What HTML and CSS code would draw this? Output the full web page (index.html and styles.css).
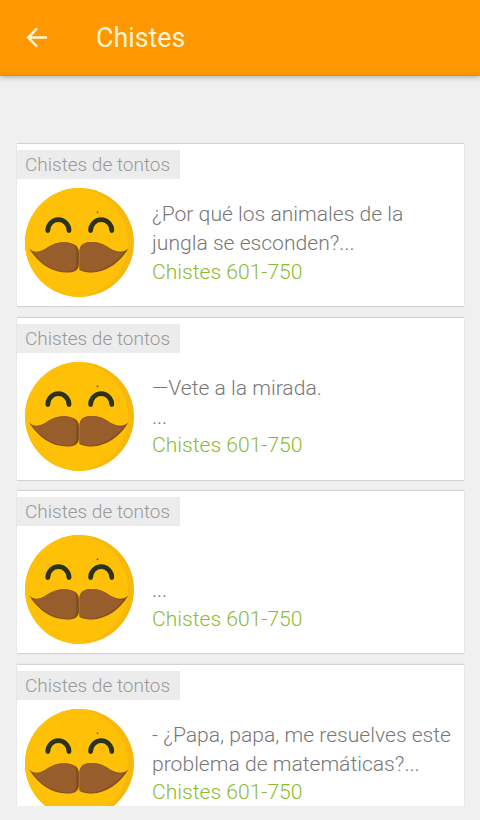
FILE: index.html
```html
<!DOCTYPE html>
<html lang="es">
<head>
<meta charset="utf-8">
<title>Chistes</title>
<link rel="stylesheet" href="styles.css">
</head>
<body>
<svg class="defs" width="0" height="0" aria-hidden="true">
  <symbol id="face" viewBox="0 0 110 110">
    <circle cx="54.500" cy="54.500" r="54.500" fill="#f6b80c"/>
    <path d="M54.500 0C84 4 103 28 103 54.500S84 105 54.500 109A54.500 54.500 0 0 1 54.500 0Z" fill="#ffc107"/>
    <path d="M22.800 42.500A10.600 10.800 0 0 1 44 42.500M65.600 42.500A10.600 10.800 0 0 1 86.800 42.500" fill="none" stroke="#2b331c" stroke-width="4.800" stroke-linecap="round"/>
    <circle cx="72.500" cy="24.300" r="1" fill="#9a6a10"/>
    <path d="M4 60.500C11 67 18 62.500 24 58.500C31 54 40 53 47 55.500C52 57 54 60 54 65V76C54 82 50 84.500 42 84.500C27 84.500 14 76 4 60.500Z" fill="#85501f"/>
    <path d="M6 62.500C12 66.500 18 62.500 24 58.500C31 54 40 53 46 55.500C50 57 51 60 51 65V76C51 81 48 83.500 41 83.500C28 83.500 16 75 6 62.500Z" fill="#975d2b"/>
    <path d="M103.300 60.500C96 67 88 62.500 82 58.500C75 54 66 53 60 55C56 56.500 54.500 60 54.500 64V82C58 84 63 84.500 67 84.500C81 84 95 75 103.300 60.500Z" fill="#85501f"/>
    <path d="M99 64.500C93 66.500 87 62 82 58.500C75 54 66 53 60 55C56 56.500 54.500 60 54.500 64V81C58 83 63 83.500 67 83.500C79 82.500 90 75 99 64.500Z" fill="#975d2b"/>
  </symbol>
</svg>
<header class="bar">
  <svg class="back" viewBox="0 0 24 24"><path d="M23 11.500H3M12 1.500L2.500 11.500L12 21.500"/></svg>
  <h1>Chistes</h1>
</header>
<main class="list">
  <article class="card">
    <span class="tag">Chistes de tontos</span>
    <div class="row">
      <svg class="face"><use href="#face"/></svg>
      <div class="text"><p>¿Por qué los animales de la<br>jungla se esconden?...</p><p class="range">Chistes 601-750</p></div>
    </div>
  </article>
  <article class="card">
    <span class="tag">Chistes de tontos</span>
    <div class="row">
      <svg class="face"><use href="#face"/></svg>
      <div class="text"><p>—Vete a la mirada.<br>...</p><p class="range">Chistes 601-750</p></div>
    </div>
  </article>
  <article class="card">
    <span class="tag">Chistes de tontos</span>
    <div class="row">
      <svg class="face"><use href="#face"/></svg>
      <div class="text"><p><br>...</p><p class="range">Chistes 601-750</p></div>
    </div>
  </article>
  <article class="card">
    <span class="tag">Chistes de tontos</span>
    <div class="row">
      <svg class="face"><use href="#face"/></svg>
      <div class="text"><p>- ¿Papa, papa, me resuelves este<br>problema de matemáticas?...</p><p class="range">Chistes 601-750</p></div>
    </div>
  </article>
</main>
</body>
</html>
```
FILE: styles.css
```css
* { box-sizing: border-box; }
body {
  margin: 0;
  height: 820px;
  padding-bottom: 14px;
  display: flex;
  flex-direction: column;
  overflow: hidden;
  background: #f0f0f0;
  font-family: Roboto, "Liberation Sans", sans-serif;
  font-weight: 300;
}
.defs { display: none; }
.bar {
  flex: none;
  height: 75px;
  padding-left: 26px;
  display: flex;
  align-items: center;
  gap: 48px;
  background: #ff9800;
  box-shadow: 0 1px 0 #b09060, 0 2px 6px rgba(0, 0, 0, .3);
}
.back {
  width: 22px;
  height: 22px;
  fill: none;
  stroke: #fff3d6;
  stroke-width: 2.8;
}
h1 {
  margin: 1px 0 0;
  color: #fff3d6;
  font-size: 26.800px;
  font-weight: 400;
  line-height: 32px;
}
.list {
  flex: 1;
  min-height: 0;
  padding: 69px 16px 0 17px;
  display: flex;
  flex-direction: column;
  gap: 11.500px;
  overflow: hidden;
}
.card {
  flex: none;
  height: 162px;
  padding-top: 6px;
  background: #fff;
  box-shadow: 0 -1px 1px #d4d4d4, 0 1px 1px #d4d4d4;
}
.tag {
  display: block;
  width: 162.500px;
  height: 29px;
  padding-left: 8px;
  background: #ececec;
  color: #999;
  font-size: 19px;
  line-height: 30.500px;
  white-space: nowrap;
}
.row {
  display: flex;
  gap: 17px;
  padding: 9px 0 0 8px;
}
.face {
  flex: none;
  width: 110px;
  height: 110px;
}
.text {
  padding-top: 12.300px;
  color: #777;
  font-size: 21.100px;
  line-height: 28.800px;
  white-space: nowrap;
}
.text p { margin: 0; }
.text .range { color: #8bbb30; }
```
